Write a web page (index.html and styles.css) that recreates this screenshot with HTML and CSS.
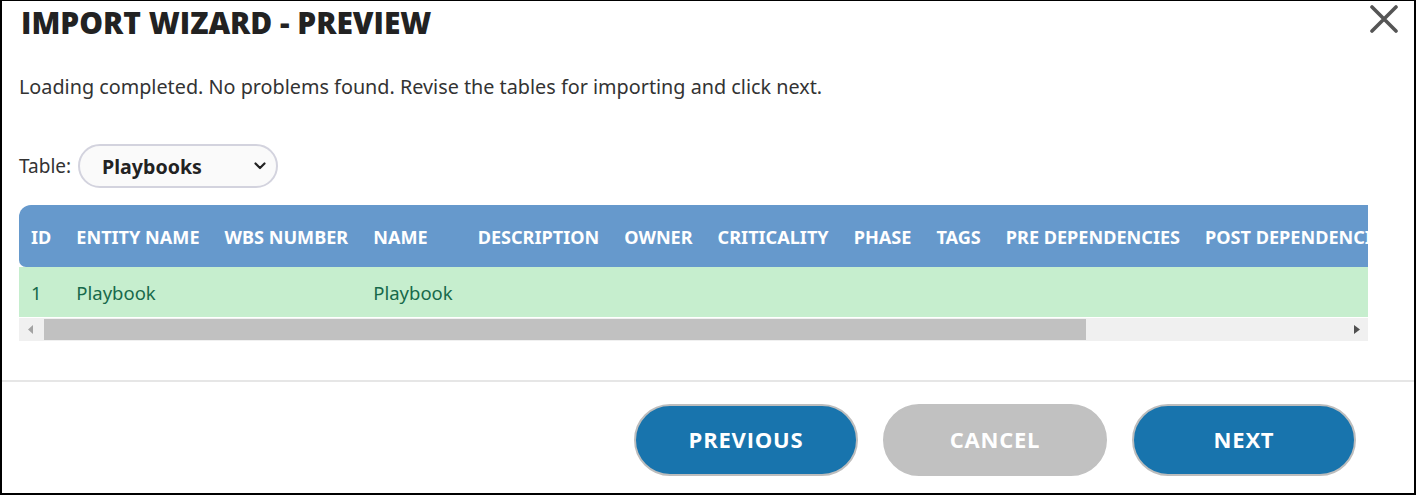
FILE: index.html
```html
<!DOCTYPE html>
<html lang="en">
<head>
<meta charset="utf-8">
<title>Import Wizard - Preview</title>
<link rel="stylesheet" href="styles.css">
</head>
<body>
<div class="dialog">
  <div class="dlg-head">
    <h1 class="dlg-title">IMPORT WIZARD - PREVIEW</h1>
    <button class="close" aria-label="Close">
      <svg width="28" height="28" viewBox="0 0 28 28"><path d="M2 2 L26 26 M26 2 L2 26" stroke="#555" stroke-width="3.6" stroke-linecap="round" fill="none"/></svg>
    </button>
  </div>
  <div class="dlg-body">
    <p class="msg">Loading completed. No problems found. Revise the tables for importing and click next.</p>
    <div class="picker">
      <span class="picker-label">Table:</span>
      <div class="select">
        <span class="select-text">Playbooks</span>
        <svg class="chev" width="12" height="8" viewBox="0 0 12 8"><path d="M1.5 1.5 L6 6 L10.5 1.5" stroke="#222" stroke-width="2.2" fill="none" stroke-linecap="round" stroke-linejoin="round"/></svg>
      </div>
    </div>
    <div class="grid">
      <div class="grid-clip">
        <table class="tbl">
          <thead>
            <tr>
              <th class="first">ID</th>
              <th>ENTITY NAME</th>
              <th>WBS NUMBER</th>
              <th>NAME</th>
              <th>DESCRIPTION</th>
              <th>OWNER</th>
              <th>CRITICALITY</th>
              <th>PHASE</th>
              <th>TAGS</th>
              <th>PRE DEPENDENCIES</th>
              <th>POST DEPENDENCIES</th>
            </tr>
          </thead>
          <tbody>
            <tr>
              <td>1</td>
              <td>Playbook</td>
              <td></td>
              <td>Playbook</td>
              <td></td>
              <td></td>
              <td></td>
              <td></td>
              <td></td>
              <td></td>
              <td></td>
            </tr>
          </tbody>
        </table>
      </div>
      <div class="hscroll">
        <span class="arrow"><svg width="6" height="9" viewBox="0 0 6 9"><path d="M5 0 L0 4.5 L5 9 Z" fill="#a3a3a3"/></svg></span>
        <div class="track"><div class="thumb"></div></div>
        <span class="arrow"><svg width="6" height="9" viewBox="0 0 6 9"><path d="M0 0 L6 4.5 L0 9 Z" fill="#505050"/></svg></span>
      </div>
    </div>
  </div>
  <div class="dlg-foot">
    <button class="btn btn-blue">PREVIOUS</button>
    <button class="btn btn-gray">CANCEL</button>
    <button class="btn btn-blue">NEXT</button>
  </div>
</div>
</body>
</html>
```
FILE: styles.css
```css
* { box-sizing: border-box; }
html, body { margin: 0; padding: 0; background: #fff; }
body { font-family: "Noto Sans", "Open Sans", sans-serif; color: #333; }

.dialog {
  width: 1416px;
  height: 495px;
  border: 2px solid #000;
  border-top-width: 1px;
  display: flex;
  flex-direction: column;
  overflow: hidden;
}

.dlg-head {
  display: flex;
  justify-content: space-between;
  align-items: flex-start;
  padding: 0 16px 0 19px;
}
.dlg-title {
  margin: 2px 0 0 0;
  font-family: "Open Sans", sans-serif;
  font-weight: 800;
  font-size: 29.9px;
  line-height: 40px;
  color: #222;
}
.close {
  border: 0;
  background: none;
  padding: 0;
  margin-top: 4px;
  width: 28px;
  height: 28px;
  cursor: pointer;
}

.dlg-body {
  padding: 0 46px 0 17px;
  flex: 1;
}
.msg {
  margin: 30px 0 0 0;
  font-size: 19.8px;
  line-height: 28px;
  color: #333;
}
.picker {
  display: flex;
  align-items: center;
  margin-top: 43px;
  gap: 7px;
}
.picker-label { font-size: 19px; color: #333; }
.select {
  width: 200px;
  height: 44px;
  border: 2px solid #d3d3de;
  border-radius: 22px;
  background: #fafafa;
  display: flex;
  align-items: center;
  justify-content: space-between;
  padding: 0 10px 0 22px;
}
.select-text { font-weight: 700; font-size: 19.6px; color: #222; }

.grid { margin-top: 17px; }
.grid-clip { overflow: hidden; width: 100%; }
.tbl {
  border-collapse: collapse;
  border-spacing: 0;
  white-space: nowrap;
  font-family: "Noto Sans", sans-serif;
}
.tbl th {
  background: #6699cc;
  color: #fff;
  font-weight: 700;
  font-size: 18.1px;
  text-align: left;
  height: 62px;
  padding: 1px 13px 0 12px;
}
.tbl th.first { border-radius: 12px 0 0 7px; }
.tbl td {
  background: #c6eece;
  color: #17694a;
  font-size: 18.5px;
  height: 50px;
  padding: 0 13px 0 12px;
}

.hscroll {
  display: flex;
  height: 23px;
  background: #f0f0f0;
  margin-top: 1px;
}
.arrow {
  width: 23px;
  display: flex;
  align-items: center;
  justify-content: center;
}
.track { flex: 1; padding: 1px 0 1px 2px; }
.thumb { height: 21px; width: 1042px; background: #c1c1c1; }

.dlg-foot {
  border-top: 2px solid #e6e6e6;
  display: flex;
  justify-content: flex-end;
  gap: 25px;
  padding: 22px 58px 0 0;
  height: 113px;
}
.btn {
  width: 224px;
  height: 72px;
  border-radius: 36px;
  border: 2px solid #bdbdbd;
  color: #fff;
  font-family: "Open Sans", sans-serif;
  font-weight: 700;
  font-size: 22px;
  letter-spacing: 0.8px;
  padding: 0 0 3px 0;
  cursor: pointer;
}
.btn-blue { background: #1874ad; }
.btn-gray { background: #c1c1c1; border-color: #c1c1c1; }
```
